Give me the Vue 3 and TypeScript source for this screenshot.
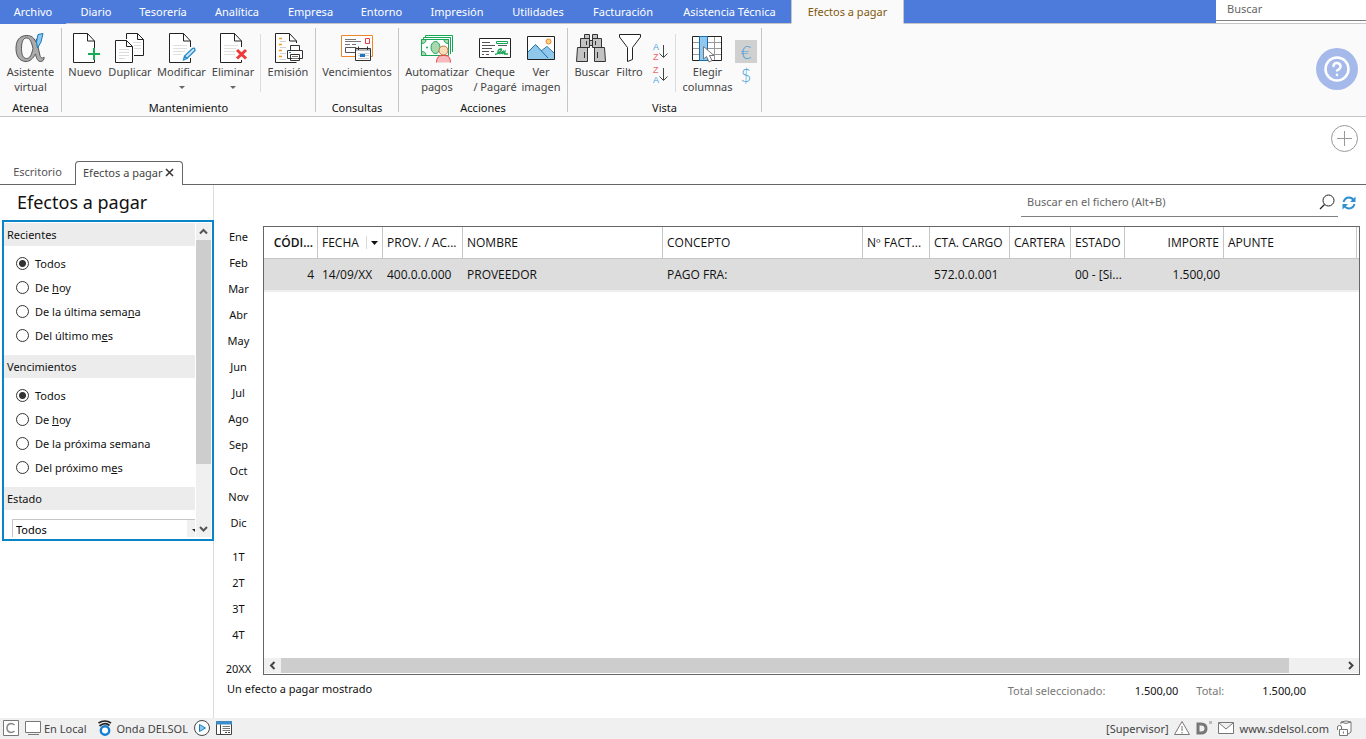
<script setup lang="ts">
import { ref } from 'vue'

interface Option { before: string; key: string; after: string }
interface Column { label: string; value: string; cls?: string; sorted?: boolean }

const menu: string[] = ['Archivo', 'Diario', 'Tesorería', 'Analítica', 'Empresa', 'Entorno', 'Impresión', 'Utilidades', 'Facturación', 'Asistencia Técnica', 'Efectos a pagar']
const months: string[] = ['Ene', 'Feb', 'Mar', 'Abr', 'May', 'Jun', 'Jul', 'Ago', 'Sep', 'Oct', 'Nov', 'Dic']
const quarters: string[] = ['1T', '2T', '3T', '4T']

const recent: Option[] = [
  { before: 'Todos', key: '', after: '' },
  { before: 'De ', key: 'h', after: 'oy' },
  { before: 'De la última sema', key: 'n', after: 'a' },
  { before: 'Del último m', key: 'e', after: 's' },
]
const due: Option[] = [
  { before: 'Todos', key: '', after: '' },
  { before: 'De ', key: 'h', after: 'oy' },
  { before: 'De la próxima semana', key: '', after: '' },
  { before: 'Del próximo m', key: 'e', after: 's' },
]
const columns: Column[] = [
  { label: 'CÓDI...', value: '4', cls: 'right strong' },
  { label: 'FECHA', value: '14/09/XX', sorted: true },
  { label: 'PROV. / AC...', value: '400.0.0.000' },
  { label: 'NOMBRE', value: 'PROVEEDOR' },
  { label: 'CONCEPTO', value: 'PAGO FRA:' },
  { label: 'Nº FACT...', value: '' },
  { label: 'CTA. CARGO', value: '572.0.0.001' },
  { label: 'CARTERA', value: '' },
  { label: 'ESTADO', value: '00 - [Si...' },
  { label: 'IMPORTE', value: '1.500,00', cls: 'right' },
  { label: 'APUNTE', value: '' },
]

const recentChoice = ref(0)
const dueChoice = ref(0)
const state = ref('Todos')
</script>

<template>
  <div class="app">
    <header class="topbar">
      <nav class="menu" aria-label="Menú principal">
        <button v-for="(item, i) in menu" :key="item" type="button" class="menu-tab" :class="{ file: i === 0, active: i === 10 }">{{ item }}</button>
      </nav>
      <div class="top-search"><input type="text" placeholder="Buscar" aria-label="Buscar" /></div>
    </header>

    <section class="ribbon">
      <div class="group">
        <div class="tools">
          <button type="button" class="tool w61">
            <svg viewBox="0 31 61 34"><path fill-rule="evenodd" d="M27 35.500C19 35.500 16 41 16 48.500C16 56 19.500 61.500 26 61.500C30 61.500 33 58.500 35.500 54C36.500 59 38 61.500 40.500 61.500C43 61.500 44.500 59.500 44 57C42.500 58.500 41 58.500 40 55.500L38 47C39 44 39.500 42 39.500 39.500L36.500 39L35.500 41.500C34 37.500 31 35.500 27 35.500ZM26.500 38C30 38 31.500 42 33 48.500C31.500 55 30 58.500 26.500 58.500C23 58.500 21.500 54.500 21.500 48.500C21.500 42 23 38 26.500 38Z" fill="#ababab" stroke="#555" /><path d="M38 34.500L43 33.500L41 42L37.500 48L36.500 42Z" fill="#8ec8f0" stroke="#1878b8" /></svg>
            <span>Asistente<br />virtual</span>
          </button>
        </div>
        <div class="caption">Atenea</div>
      </div>

      <div class="group">
        <div class="tools lead">
          <button type="button" class="tool w40">
            <svg viewBox="65 31 40 34"><path d="M94.500 49V41L87.500 33.500H73.500V62.500H94.500V60M87.500 33.500V41H94.500" fill="#fff" stroke="#222" /><path d="M94 48V60M88 54H100" stroke="#17ad55" stroke-width="2" /></svg>
            <span>Nuevo</span>
          </button>
          <button type="button" class="tool w50">
            <svg viewBox="105 31 50 34"><path d="M126.500 39V33.500H137.500L143.500 39.500V55.500H134M137.500 33.500V39.500H143.500M115.500 40.500H126.500L132.500 46.500V62.500H115.500ZM126.500 40.500V46.500H132.500" fill="#fff" stroke="#222" /><path d="M119 49.500H129M119 52.500H129M119 55.500H129M119 58.500H125M133 42.500H141M134 45.500H141M134 48.500H141" stroke="#dcdcdc" /></svg>
            <span>Duplicar</span>
          </button>
          <button type="button" class="tool w53">
            <svg viewBox="155 31 53 34"><path d="M190.500 47V41L183.500 33.500H169.500V62.500H190.500V58M183.500 33.500V41H190.500" fill="#fff" stroke="#222" /><path d="M173 45.500H187M173 48.500H187M173 51.500H185M173 54.500H182" stroke="#e0e0e0" /><path d="M183.500 60L184.500 56L192.500 48.500Q195 47 195 50.500L187 58.500ZM184.500 56L187 58.500" fill="#cae6f8" stroke="#2489ca" stroke-width="1.300" /></svg>
            <span>Modificar</span><i class="caret"></i>
          </button>
          <button type="button" class="tool w50">
            <svg viewBox="208 31 50 34"><path d="M241.500 47V41L234.500 33.500H220.500V62.500H241.500V60M234.500 33.500V41H241.500" fill="#fff" stroke="#222" /><path d="M224 45.500H238M224 48.500H236M224 51.500H235M224 54.500H235" stroke="#e0e0e0" /><path d="M237 50L246 58.500M246 50L237 58.500" stroke="#f03a3a" stroke-width="3" /></svg>
            <span>Eliminar</span><i class="caret"></i>
          </button>
          <i class="rule"></i>
          <button type="button" class="tool w54">
            <svg viewBox="261 31 54 34"><path d="M296.500 43V41L289.500 33.500H275.500V62.500H296.500M289.500 33.500V41H296.500" fill="#fff" stroke="#222" /><path d="M279 38.500H282M279 44.500H282M279 50.500H282M279 56.500H282" stroke="#f39a17" stroke-width="1.500" /><path d="M280 41.500H286M280 47.500H286M280 53.500H286M280 59.500H286" stroke="#d2d2d2" /><path d="M290.500 50V45.500H299.500V50M287.500 50.500H302.500V58.500H287.500ZM290.500 54.500H299.500V60.500H290.500Z" fill="#fff" stroke="#333" /><path d="M292 56.500H298M292 58.500H298" stroke="#777" /><path d="M289 52.500H291" stroke="#2489ca" /></svg>
            <span>Emisión</span>
          </button>
        </div>
        <div class="caption">Mantenimiento</div>
      </div>

      <div class="group">
        <div class="tools">
          <button type="button" class="tool w82">
            <svg viewBox="316 31 82 34"><path d="M341.500 35.500H372.500V56.500H341.500Z" fill="#fff" stroke="#f0862b" /><path d="M345 39.500H356M345 41.500H361M345 44.500H350M352 44.500H356" stroke="#777" /><path d="M365.500 38.500H369.500V43.500H365.500Z" fill="#fff" stroke="#ee3b3b" /><path d="M345.500 47.500H356V52.500H345.500Z" fill="#fff" stroke="#555" /><path d="M355.500 48.500H370.500V60.500H355.500Z" fill="#fff" stroke="#333" /><path d="M356 50H370" stroke="#bbb" stroke-width="2" /><path d="M358.500 46.500V50M367.500 46.500V50" stroke="#333" /><path d="M358 53.500H369M358 58.500H369M358 55.500H369" fill="none" stroke="#ccc" /><path d="M360 54H365V57H360Z" fill="#1b78c5" /></svg>
            <span>Vencimientos</span>
          </button>
        </div>
        <div class="caption">Consultas</div>
      </div>

      <div class="group">
        <div class="tools lead">
          <button type="button" class="tool w70">
            <svg viewBox="402 31 70 34"><g fill="#fff" stroke="#17a556"><path d="M425.500 38V35.500H452.500V52" /><path d="M423.500 40V37.500H450.500V54" /><path d="M421.500 39.500H448.500V55.500H421.500Z" /><path d="M421.500 43.500Q426 43.500 426 39.500H421.500ZM421.500 51.500Q426 51.500 426 55.500H421.500ZM448.500 43.500Q444 43.500 444 39.500H448.500Z" fill="#a9d8ae" /><ellipse cx="435.500" cy="47.500" rx="4.500" ry="6" fill="#a9d8ae" /></g><circle cx="427" cy="47.500" r="1" fill="#17a556" /><circle cx="443.500" cy="50.500" r="4.500" fill="#fbdcb8" stroke="#b87943" /><path d="M436.500 62.500Q436.500 55.500 442 55.500H445Q450.500 55.500 450.500 62.500" fill="#f8b9bd" stroke="#e94848" /></svg>
            <span>Automatizar<br />pagos</span>
          </button>
          <button type="button" class="tool w46">
            <svg viewBox="472 31 46 34"><path d="M479.500 38.500H510.500V57.500H479.500Z" fill="#fff" stroke="#222" /><path d="M482 42.500H490M482 45.500H495M498 45.500H507M482 48.500H492M482 51.500H489M491 51.500H494M482 54.500H484M486 54.500H489" stroke="#555" /><path d="M496.500 41.500H507.500V43.500H496.500Z" fill="#fff" stroke="#17a556" /><path d="M495 54.500C499 54 503 49 501 49C498 49 496 54 500 53.500L503 51.500L502 54L505 51.500L504.500 54H508" fill="none" stroke="#17a556" stroke-width="1.300" /></svg>
            <span>Cheque<br />/ Pagaré</span>
          </button>
          <button type="button" class="tool w46">
            <svg viewBox="518 31 46 34"><path d="M527.500 36.500H554.500V59.500H527.500Z" fill="#fff" /><path d="M528 52L535.500 44.500L542 51L547 47L554.500 54V59.500H528Z" fill="#90c8ec" /><path d="M528 52L535.500 44.500L548 58M541 51L547 46.500L554 53" fill="none" stroke="#176fae" /><path d="M527.500 36.500H554.500V59.500H527.500Z" fill="none" stroke="#222" /><circle cx="548.500" cy="41.500" r="2.500" fill="#ffd083" stroke="#ee852b" /></svg>
            <span>Ver<br />imagen</span>
          </button>
        </div>
        <div class="caption">Acciones</div>
      </div>

      <div class="group">
        <div class="tools lead-s">
          <button type="button" class="tool w44">
            <svg viewBox="570 31 44 34"><path d="M584.500 34.500H589.500V38.500H584.500ZM592.500 34.500H597.500V38.500H592.500ZM580.500 38.500H589.500V47.500H580.500ZM592.500 38.500H601.500V47.500H592.500ZM589.500 40.500H592.500V45.500H589.500ZM577.500 47.500H587.500V61.500H576.500ZM594.500 47.500H604.500L605.500 61.500H594.500Z" fill="#c3c3c3" stroke="#333" /><path d="M586.500 41V45M595.500 41V45M584.500 52V58M597.500 52V58" stroke="#333" /></svg>
            <span>Buscar</span>
          </button>
          <button type="button" class="tool w31">
            <svg viewBox="614 31 31 34"><path d="M619.500 34.500H640.500V37L632.500 47.500V59.500L627.500 61.500V47.500L619.500 37Z" fill="#fff" stroke="#222" /></svg>
            <span>Filtro</span>
          </button>
          <div class="sorts">
            <button type="button" aria-label="Ordenar ascendente">
              <svg viewBox="645 41 30 23"><text x="653" y="50" fill="#4aa0dc">A</text><text x="653" y="60" fill="#f06464">Z</text><path d="M663.500 45V57M659.500 53.500L663.500 57.500L667.500 53.500" fill="none" stroke="#444" /></svg>
            </button>
            <button type="button" aria-label="Ordenar descendente">
              <svg viewBox="645 41 30 23"><text x="653" y="50" fill="#f06464">Z</text><text x="653" y="60" fill="#4aa0dc">A</text><path d="M663.500 45V57M659.500 53.500L663.500 57.500L667.500 53.500" fill="none" stroke="#444" /></svg>
            </button>
          </div>
          <i class="rule"></i>
          <button type="button" class="tool w63">
            <svg viewBox="676 31 63 34"><path d="M692.500 36.500H721.500V60.500H692.500Z" fill="#fff" /><path d="M693 42.500H721M693 48.500H721M693 54.500H721M714.500 37V60" stroke="#999" /><path d="M692.500 36.500H721.500V60.500H692.500Z" fill="none" stroke="#222" /><path d="M699.500 36.500H707.500V60.500H699.500Z" fill="#90c8f0" stroke="#176fae" /><path d="M703.500 46.500V59L706.500 56.500L709 62L712 60.500L709.500 55.500H714Z" fill="#fff" stroke="#777" /></svg>
            <span>Elegir<br />columnas</span>
          </button>
          <div class="money">
            <button type="button" class="on" aria-label="Ver en euros">€</button>
            <button type="button" aria-label="Ver en dólares">$</button>
          </div>
        </div>
        <div class="caption">Vista</div>
      </div>

      <button type="button" class="help" aria-label="Ayuda">
        <svg viewBox="0 0 42 42"><circle cx="21" cy="21" r="21" fill="#a5baeb" /><g fill="none" stroke="#fff" stroke-width="2.500" stroke-linecap="round"><circle cx="21" cy="21" r="11.500" /><path d="M17.500 18Q18 14.500 21.500 15Q25 16 24.500 19Q24 21 21 22.500" /><path d="M21 26.800V27" /></g></svg>
      </button>
    </section>

    <section class="strip">
      <div class="tabs">
        <button type="button" class="tab">Escritorio</button>
        <div class="tab current">
          <button type="button">Efectos a pagar</button>
          <button type="button" class="close" aria-label="Cerrar"><svg viewBox="0 0 9 9"><path d="M1 1L8 8M8 1L1 8" stroke="#333" stroke-width="1.500" /></svg></button>
        </div>
        <i class="fill"></i>
      </div>
      <button type="button" class="add" aria-label="Añadir"><svg viewBox="0 0 28 28"><path d="M13.500 6V21M6 13.500H21" stroke="#999" /><circle cx="13.500" cy="13.500" r="13" fill="none" stroke="#999" /></svg></button>
    </section>

    <main class="main">
      <aside class="side">
        <h1>Efectos a pagar</h1>
        <div class="panel">
          <div class="filters">
            <fieldset>
              <legend>Recientes</legend>
              <label v-for="(o, i) in recent" :key="i"><input v-model="recentChoice" type="radio" name="recent" :value="i" /><span>{{ o.before }}<u>{{ o.key }}</u>{{ o.after }}</span></label>
            </fieldset>
            <fieldset>
              <legend>Vencimientos</legend>
              <label v-for="(o, i) in due" :key="i"><input v-model="dueChoice" type="radio" name="due" :value="i" /><span>{{ o.before }}<u>{{ o.key }}</u>{{ o.after }}</span></label>
            </fieldset>
            <fieldset>
              <legend>Estado</legend>
              <div class="combo">
                <select v-model="state" aria-label="Estado"><option>Todos</option></select>
                <i class="drop"><svg viewBox="0 0 17 20"><path d="M5 9H11L8 12Z" fill="#222" /></svg></i>
              </div>
            </fieldset>
          </div>
          <div class="vbar">
            <svg viewBox="0 0 15 17"><path d="M4 10.500L7.500 7L11 10.500" fill="none" stroke="#555" stroke-width="2" /></svg>
            <i></i>
            <svg viewBox="0 0 15 17"><path d="M4 7L7.500 10.500L11 7" fill="none" stroke="#555" stroke-width="2" /></svg>
          </div>
        </div>
      </aside>

      <section class="content">
        <div class="file-search">
          <div class="field">
            <input type="text" placeholder="Buscar en el fichero (Alt+B)" aria-label="Buscar en el fichero" />
            <svg viewBox="0 0 16 16"><circle cx="9.500" cy="6.500" r="5.500" fill="none" stroke="#222" /><path d="M5.500 10.500L1 15" stroke="#222" stroke-width="1.300" /></svg>
          </div>
          <button type="button" class="refresh" aria-label="Actualizar">
            <svg viewBox="0 0 14 14"><path d="M1.500 6Q3 1.500 7 1.500Q10 1.500 12 4.500M12.500 8Q11 12.500 7 12.500Q4 12.500 2 9.500" fill="none" stroke="#2b8fd2" stroke-width="2" /><path d="M13.500 0.500V6H8ZM0.500 13.500V8H6Z" fill="#2b8fd2" /></svg>
          </button>
        </div>
        <div class="work">
          <nav class="periods" aria-label="Periodos">
            <button v-for="m in months" :key="m" type="button">{{ m }}</button>
            <button v-for="(q, i) in quarters" :key="q" type="button" :class="{ gap: i === 0 }">{{ q }}</button>
            <button type="button" class="gap">20XX</button>
          </nav>
          <div class="grid">
            <table>
              <colgroup><col class="c54" /><col class="c65" /><col class="c80" /><col class="c200" /><col class="c200" /><col class="c67" /><col class="c80" /><col class="c61" /><col class="c54" /><col class="c99" /><col /><col class="c2" /></colgroup>
              <thead>
                <tr>
                  <th v-for="c in columns" :key="c.label" scope="col" :class="c.cls"><span class="head">{{ c.label }}<svg v-if="c.sorted" class="sort" viewBox="0 0 12 14"><path d="M0.500 0V13" stroke="#d8d8d8" /><path d="M5 5H12L8.500 9Z" fill="#111" /></svg></span></th>
                  <td></td>
                </tr>
              </thead>
              <tbody>
                <tr><td v-for="c in columns" :key="c.label" :class="c.cls">{{ c.value }}</td><td></td></tr>
              </tbody>
            </table>
            <div class="hbar">
              <svg viewBox="0 0 17 15"><path d="M10.500 4L7 7.500L10.500 11" fill="none" stroke="#444" stroke-width="2" /></svg>
              <div class="track"><i></i></div>
              <svg viewBox="0 0 17 15"><path d="M7 4L10.500 7.500L7 11" fill="none" stroke="#444" stroke-width="2" /></svg>
            </div>
          </div>
        </div>
        <div class="summary">
          <span class="count">Un efecto a pagar mostrado</span>
          <span class="sum-label">Total seleccionado:</span><b>1.500,00</b>
          <span class="sum-label total">Total:</span><b>1.500,00</b>
        </div>
      </section>
    </main>

    <footer class="status">
      <svg class="i16" viewBox="0 0 16 16"><path d="M0.500 0.500H15.500V15.500H0.500Z" fill="#fff" stroke="#777" /><path d="M11.500 5Q10 3.500 8 3.500Q4 4 4 8Q4 12 8 12.500Q10 12.500 11.500 11" fill="none" stroke="#888" stroke-width="1.500" /></svg>
      <svg class="i16" viewBox="0 0 16 16"><path d="M0.500 1.500H15.500V12.500H0.500ZM3 14.500H14" fill="#fff" stroke="#777" /></svg>
      <span class="local">En Local</span>
      <svg class="i16 wave" viewBox="0 0 16 16"><path d="M1.500 3Q8-1 14 3M2.500 6Q8 1.500 12.500 5.500" fill="none" stroke="#222" stroke-width="1.700" /><circle cx="8" cy="10.500" r="4.200" fill="#fff" stroke="#167fd1" stroke-width="2.400" /></svg>
      <span class="onda">Onda DELSOL</span>
      <svg class="i16" viewBox="0 0 16 16"><circle cx="8" cy="8" r="7.500" fill="#fff" stroke="#444" /><path d="M5.500 4.500L11.500 8L5.500 11.500Z" fill="#90c8f0" stroke="#167fc1" /></svg>
      <svg class="i16" viewBox="0 0 16 16"><path d="M0.500 1.500H15.500V14.500H0.500Z" fill="#fff" stroke="#444" /><path d="M0 1H16V4.500H0Z" fill="#3a8bc6" /><path d="M4.500 4.500V14" stroke="#444" /><path d="M6.500 6.500H14M6.500 8.500H14M6.500 10.500H14" stroke="#777" /><path d="M9 12.500H14" stroke="#444" stroke-dasharray="2 1" /></svg>
      <span class="push">[Supervisor]</span>
      <svg class="i16" viewBox="0 0 16 16"><path d="M8 1.500L15.500 14.500H0.500Z" fill="#fff" stroke="#777" /><path d="M8 6V11M8 12V13.500" stroke="#777" /></svg>
      <svg class="i16" viewBox="0 0 16 16"><path d="M2 4H5Q10 4 10 8.500Q10 13 5 13H2Z" fill="none" stroke="#777" stroke-width="3" /><path d="M13 1H16V4H13Z" fill="#bbb" /></svg>
      <svg class="i16" viewBox="0 0 16 16"><path d="M0.500 2.500H15.500V13.500H0.500ZM1 3L8 9L15 3" fill="#fff" stroke="#777" /></svg>
      <a href="#">www.sdelsol.com</a>
      <svg class="i16 last" viewBox="0 0 16 16"><path d="M5 4V2Q10 0 15 2V12Q13 14 11 14M5 2Q10 5 15 2" fill="#fff" stroke="#777" /><path d="M3.500 9.500H11.500V15.500H3.500ZM1.500 10V7Q1.500 5.500 3.500 5.500Q5.500 5.500 5.500 7V9" fill="#fff" stroke="#777" /><path d="M7.500 11.500V13.500" stroke="#777" /></svg>
    </footer>
  </div>
</template>

<style>
body { margin: 0; background: #fff; }
</style>

<style scoped>
.app { display: flex; flex-direction: column; min-height: 100vh; overflow: hidden; font: 11px/15px "Noto Sans", "Open Sans", sans-serif; color: #111; }
.app *, .app *::before { box-sizing: border-box; }
button { border: 0; padding: 0; margin: 0; background: none; font: inherit; color: inherit; white-space: nowrap; }
input, select { font: inherit; border: 0; padding: 0; margin: 0; outline: 0; background: none; }
input::placeholder { color: #666; opacity: 1; }
svg { display: block; flex: none; }

.topbar { display: flex; height: 24px; background: #4d7bdb; }
.menu { display: grid; flex: 1; grid-template-columns: 66px 60px 74px 74px 73px 69px 82px 80px 90px 123px 113px 1fr; }
.menu::after { content: ""; border-bottom: 1px solid #c6c6c6; }
.menu-tab { color: #fff; border-bottom: 1px solid #c6c6c6; }
.menu-tab.file { border-color: #4d7bdb; }
.menu-tab.active { background: #fafafa; color: #80590c; border: 1px solid #c6c6c6; border-top: 0; border-bottom-color: #fafafa; }
.top-search { width: 150px; background: #fff; border-bottom: 1px solid #c6c6c6; }
.top-search input { display: block; width: 100%; height: 21px; padding: 0 11px 3px; border-bottom: 1px solid #808080; }

.ribbon { display: flex; height: 93px; padding-top: 4px; background: #fafafa; border-bottom: 1px solid #c6c6c6; }
.group { display: flex; flex-direction: column; height: 84px; border-right: 1px solid #c6c6c6; }
.tools { display: flex; flex: none; height: 72px; padding-top: 3px; }
.lead { padding-left: 3px; padding-right: 3px; }
.group:nth-child(2) .lead { padding-right: 0; }
.lead-s { padding-left: 2px; padding-right: 4px; }
.tool { display: flex; flex-direction: column; align-items: center; color: #444; text-align: center; }
.tool svg { width: 100%; height: 34px; margin-bottom: -1px; }
.caption { text-align: center; line-height: 15px; }
.w31 { width: 31px; } .w40 { width: 40px; } .w44 { width: 44px; } .w46 { width: 46px; } .w50 { width: 50px; } .w53 { width: 53px; } .w54 { width: 54px; }
.w61 { width: 61px; } .w63 { width: 63px; } .w70 { width: 70px; } .w82 { width: 82px; }
.caret { margin-top: 7px; border: 3px solid transparent; border-top-color: #666; border-bottom: 0; }
.rule { width: 1px; height: 58px; margin: 3px 0 0 2px; background: #dcdcdc; }
.sorts { padding-top: 10px; width: 30px; }
.sorts + .rule { margin-left: 0; }
.sorts button { display: block; }
.sorts svg { width: 30px; height: 23px; font: 9px "Liberation Sans", sans-serif; }
.money { width: 22px; margin-left: -4px; padding-top: 9px; color: #4a9fd8; font: 300 18px/22px Lato, sans-serif; }
.money button { display: block; width: 22px; height: 23px; }
.money .on { background: #d0d0d0; }
.help { width: 42px; height: 42px; margin: 20px 8px 0 auto; }

.strip { display: flex; position: relative; height: 68px; align-items: flex-end; }
.tabs { display: flex; flex: 1; height: 24px; color: #555; }
.tab { width: 75px; padding-bottom: 2px; border-bottom: 1px solid #666; }
.tab.current { display: flex; width: 108px; padding-left: 7px; align-items: center; gap: 2px; border: 1px solid #666; border-bottom: 0; border-radius: 4px 4px 0 0; color: #444; }
.close { width: 9px; height: 9px; }
.fill { flex: 1; border-bottom: 1px solid #666; }
.add { position: absolute; right: 7px; top: 8px; width: 28px; height: 28px; }

.main { display: flex; flex: 1; }
.side { width: 214px; border-right: 1px solid #dcdcdc; }
h1 { margin: 0; padding: 4px 0 0 17px; height: 35px; font-size: 18px; line-height: 27px; font-weight: 400; }
.panel { display: flex; width: 212px; height: 321px; margin-left: 2px; padding: 1px 1px 2px 0; border: 2px solid #0a84c8; overflow: hidden; }
.filters { flex: 1; overflow: hidden; margin-right: 1px; }
fieldset { display: block; min-width: 0; margin: 0; padding: 0 0 8px; border: 0; }
legend { float: left; width: 100%; height: 23px; padding: 0 3px; margin-bottom: 5px; background: #ececec; line-height: 23px; }
label { display: flex; clear: both; align-items: center; height: 24px; padding-left: 12px; gap: 6px; }
input[type="radio"] { appearance: none; width: 13px; height: 13px; border: 1px solid #333; border-radius: 50%; background: #fff; }
input[type="radio"]:checked { background: radial-gradient(circle, #333 3px, #fff 4px); }
.combo { display: flex; clear: both; width: 200px; height: 20px; border: 1px solid #c6c6c6; margin-left: 8px; }
fieldset:last-child legend { margin-bottom: 9px; }
.combo select { appearance: none; flex: 1; padding: 0 3px; }
.drop { width: 24px; background: #f0f0f0; }
.drop svg { width: 17px; height: 20px; }
.vbar { display: flex; flex-direction: column; width: 15px; background: #f0f0f0; }
.vbar svg { width: 15px; height: 17px; }
.vbar i { height: 224px; background: #cdcdcd; margin-bottom: auto; }

.content { display: flex; flex: 1; flex-direction: column; min-width: 0; padding-right: 6px; }
.file-search { display: flex; height: 41px; justify-content: flex-end; align-items: flex-start; }
.field { display: flex; width: 317px; height: 32px; padding: 2px 3px 0 6px; align-items: center; border-bottom: 1px solid #808080; }
.field input { flex: 1; }
.field svg { width: 16px; height: 16px; }
.refresh { margin: 11px 4px 0 4px; }
.refresh svg { width: 14px; height: 14px; }
.work { display: flex; flex: 1; }
.periods { display: flex; flex-direction: column; width: 49px; margin: -2px 0 -8px; }
.periods button { height: 26px; padding-bottom: 1px; }
.periods .gap { margin-top: 8px; }
.grid { display: flex; flex: 1; flex-direction: column; min-width: 0; border: 1px solid #666; }
table { width: 100%; table-layout: fixed; border-collapse: separate; border-spacing: 0; font: 12px/16px "Open Sans", "Noto Sans", sans-serif; }
th, td { padding: 0 4px; text-align: left; font-weight: 400; white-space: nowrap; overflow: hidden; }
thead td { padding: 0; border-bottom: 1px solid #c6c6c6; }
th { height: 32px; border-right: 1px solid #c6c6c6; border-bottom: 1px solid #c6c6c6; }
tbody td { height: 33px; background: #ddd; border-bottom: 2px solid #eee; }
.right { text-align: right; }
th.strong { font-weight: 600; }
.head { display: inline-flex; align-items: center; gap: 7px; }
.sort { width: 12px; height: 14px; }
.c2 { width: 2px; } .c54 { width: 54px; } .c61 { width: 61px; } .c65 { width: 65px; } .c67 { width: 67px; } .c80 { width: 80px; } .c99 { width: 99px; } .c200 { width: 200px; }
.hbar { display: flex; height: 15px; margin: auto 0 1px; background: #f0f0f0; }
.hbar svg { width: 17px; height: 15px; }
.track { flex: 1; }
.track i { display: block; width: 95%; height: 15px; background: #cdcdcd; }
.summary { display: flex; height: 43px; padding: 8px 54px 0 13px; }
.count { margin: -2px auto 0 0; }
.sum-label { color: #777; width: 127px; }
.sum-label.total { width: 66px; margin-left: 18px; }
.summary b { font-weight: 400; }

.status { display: flex; height: 21px; padding: 0 14px 1px 3px; align-items: center; background: #f0f0f0; color: #444; }
.i16 { width: 16px; height: 16px; margin-right: 6px; }
.i16.wave { margin-right: 3px; }
.i16.last { margin-right: 0; }
.local { margin: 0 11px 0 -3px; }
.onda { margin-right: 6px; }
.push { margin: 0 5px 0 auto; }
.status a { margin-right: 7px; color: inherit; text-decoration: none; }
</style>
